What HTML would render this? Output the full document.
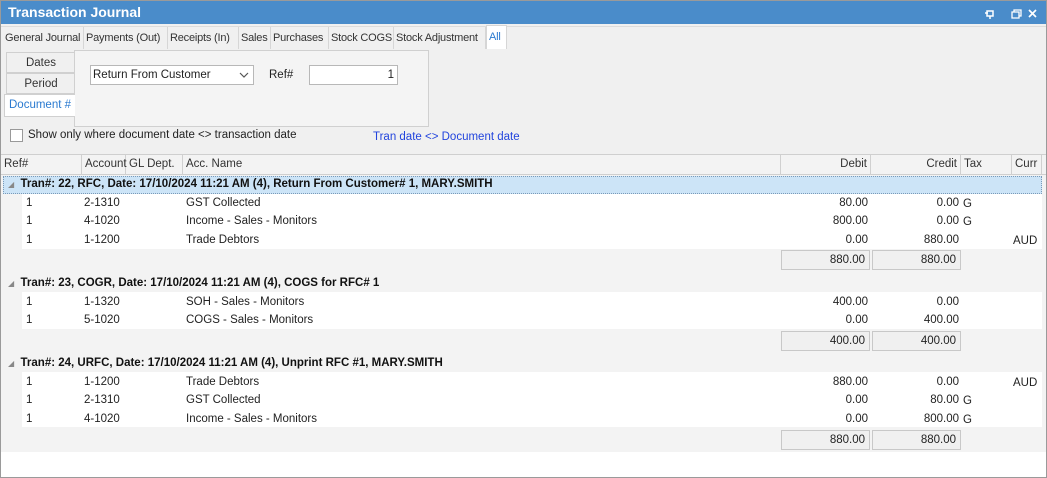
<!DOCTYPE html>
<html><head><meta charset="utf-8"><style>
*{margin:0;padding:0;box-sizing:border-box}
body{width:1047px;height:478px;overflow:hidden;background:#f0f0f0;font-family:"Liberation Sans",Tahoma,sans-serif;font-size:11.5px;color:#222;position:relative}
.a{position:absolute;white-space:nowrap}
.t{line-height:20px}
.r{text-align:right}
.tab{position:absolute;top:27px;height:22px;line-height:22px;border-right:1px solid #d6d6d6;padding-left:2px;color:#333;white-space:nowrap;overflow:hidden;font-size:11px;letter-spacing:-0.2px}
.hdr{position:absolute;top:155px;height:19px;line-height:18px;border-right:1px solid #d0d0d0;padding:0 3px;color:#333;white-space:nowrap}
.box{position:absolute;background:#f0f0f0;border:1px solid #c8c8c8;text-align:right;padding-right:4px;line-height:18px}
.g{font-weight:bold;color:#111}
</style></head><body>
<div class="a" style="left:0;top:0;width:1047px;height:478px;border:1px solid #9a9a9a"></div>
<div class="a" style="left:1px;top:1px;width:1045px;height:23px;background:#4a8cca"></div>
<div class="a" style="left:8px;top:4px;color:#fff;font-weight:bold;font-size:14px">Transaction Journal</div>
<svg class="a" style="left:984px;top:8px" width="56" height="12">
<path d="M3 3h6v5H3z M1 5h3 M6 8v3" stroke="#fff" stroke-width="1.5" fill="none"/>
<path d="M28 4h7v6h-7z M30 4V2h7v6h-2" stroke="#fff" stroke-width="1.3" fill="none"/>
<path d="M45 2l7 7M52 2l-7 7" stroke="#fff" stroke-width="1.7"/>
</svg>
<div class="a" style="left:1px;top:26px;width:1045px;height:1px;background:#dcdcdc"></div>
<div class="tab" style="left:3px;width:81px">General Journal</div>
<div class="tab" style="left:84px;width:84px">Payments (Out)</div>
<div class="tab" style="left:168px;width:71px">Receipts (In)</div>
<div class="tab" style="left:239px;width:32px">Sales</div>
<div class="tab" style="left:271px;width:58px">Purchases</div>
<div class="tab" style="left:329px;width:65px">Stock COGS</div>
<div class="tab" style="left:394px;width:92px">Stock Adjustment</div>
<div class="tab" style="left:486px;width:21px;background:#fff;color:#2a7ad0;top:25px;height:24px;border:1px solid #d6d6d6;border-bottom:none">All</div>
<div class="a" style="left:74px;top:50px;width:355px;height:77px;border:1px solid #d0d0d0;background:#f4f4f4"></div>
<div class="a" style="left:6px;top:52px;width:69px;height:21px;border:1px solid #d0d0d0;border-right:none;text-align:center;line-height:20px;color:#333">Dates</div>
<div class="a" style="left:6px;top:73px;width:69px;height:21px;border:1px solid #d0d0d0;border-right:none;text-align:center;line-height:20px;color:#333">Period</div>
<div class="a" style="left:4px;top:94px;width:71px;height:23px;border:1px solid #d0d0d0;border-right:none;background:#fff;line-height:21px;padding-left:4px;color:#2a7ad0">Document #</div>
<div class="a" style="left:90px;top:65px;width:164px;height:20px;border:1px solid #b8b8b8;background:#fff;line-height:18px;padding-left:2px">Return From Customer</div>
<svg class="a" style="left:239px;top:71px" width="10" height="8"><path d="M1 2l4 4 4-4" stroke="#555" stroke-width="1.2" fill="none"/></svg>
<div class="a t" style="left:269px;top:65px">Ref#</div>
<div class="a" style="left:309px;top:65px;width:89px;height:20px;border:1px solid #b8b8b8;background:#fff;line-height:18px;text-align:right;padding-right:3px">1</div>
<div class="a" style="left:10px;top:129px;width:13px;height:13px;border:1px solid #999;background:#fff"></div>
<div class="a t" style="left:28px;top:125px">Show only where document date &lt;&gt; transaction date</div>
<div class="a t" style="left:373px;top:127px;color:#2244dd">Tran date &lt;&gt; Document date</div>
<!-- grid -->
<div class="a" style="left:1px;top:154px;width:1045px;height:1px;background:#cfcfcf"></div>
<div class="a" style="left:1px;top:155px;width:1045px;height:297px;background:#f3f3f3"></div>
<div class="a" style="left:1px;top:452px;width:1045px;height:25px;background:#fff"></div>
<div class="hdr" style="left:1px;width:81px">Ref#</div>
<div class="hdr" style="left:82px;width:44px">Account</div>
<div class="hdr" style="left:126px;width:57px">GL Dept.</div>
<div class="hdr" style="left:183px;width:598px">Acc. Name</div>
<div class="hdr r" style="left:781px;width:90px">Debit</div>
<div class="hdr r" style="left:871px;width:90px">Credit</div>
<div class="hdr" style="left:961px;width:51px">Tax</div>
<div class="hdr" style="left:1012px;width:30px">Curr</div>
<div class="a" style="left:1px;top:174px;width:1045px;height:1px;background:#cfcfcf"></div>

<div class="a" style="left:3px;top:176px;width:1039px;height:18px;background:#cce4f7;border:1px dotted #7a9ab8"></div>
<div class="a t g" style="left:8px;top:174px"><span style="color:#888;font-size:8px;font-weight:normal">◢</span> &nbsp;Tran#: 22, RFC, Date: 17/10/2024 11:21 AM (4), Return From Customer# 1, MARY.SMITH</div>
<div class="a" style="left:22px;top:194px;width:1020px;height:55px;background:#fff"></div>
<div class="a t" style="left:26px;top:193px">1</div><div class="a t" style="left:84px;top:193px">2-1310</div><div class="a t" style="left:186px;top:193px">GST Collected</div><div class="a t r" style="left:781px;top:193px;width:87px">80.00</div><div class="a t r" style="left:871px;top:193px;width:88px">0.00</div><div class="a t" style="left:963px;top:194px">G</div>
<div class="a t" style="left:26px;top:211px">1</div><div class="a t" style="left:84px;top:211px">4-1020</div><div class="a t" style="left:186px;top:211px">Income - Sales - Monitors</div><div class="a t r" style="left:781px;top:211px;width:87px">800.00</div><div class="a t r" style="left:871px;top:211px;width:88px">0.00</div><div class="a t" style="left:963px;top:212px">G</div>
<div class="a t" style="left:26px;top:230px">1</div><div class="a t" style="left:84px;top:230px">1-1200</div><div class="a t" style="left:186px;top:230px">Trade Debtors</div><div class="a t r" style="left:781px;top:230px;width:87px">0.00</div><div class="a t r" style="left:871px;top:230px;width:88px">880.00</div><div class="a t" style="left:1013px;top:231px">AUD</div>
<div class="box" style="left:781px;top:250px;width:89px;height:20px">880.00</div>
<div class="box" style="left:872px;top:250px;width:89px;height:20px">880.00</div>

<div class="a t g" style="left:8px;top:273px"><span style="color:#888;font-size:8px;font-weight:normal">◢</span> &nbsp;Tran#: 23, COGR, Date: 17/10/2024 11:21 AM (4), COGS for RFC# 1</div>
<div class="a" style="left:22px;top:292px;width:1020px;height:37px;background:#fff"></div>
<div class="a t" style="left:26px;top:292px">1</div><div class="a t" style="left:84px;top:292px">1-1320</div><div class="a t" style="left:186px;top:292px">SOH - Sales - Monitors</div><div class="a t r" style="left:781px;top:292px;width:87px">400.00</div><div class="a t r" style="left:871px;top:292px;width:88px">0.00</div>
<div class="a t" style="left:26px;top:310px">1</div><div class="a t" style="left:84px;top:310px">5-1020</div><div class="a t" style="left:186px;top:310px">COGS - Sales - Monitors</div><div class="a t r" style="left:781px;top:310px;width:87px">0.00</div><div class="a t r" style="left:871px;top:310px;width:88px">400.00</div>
<div class="box" style="left:781px;top:331px;width:89px;height:20px">400.00</div>
<div class="box" style="left:872px;top:331px;width:89px;height:20px">400.00</div>

<div class="a t g" style="left:8px;top:353px"><span style="color:#888;font-size:8px;font-weight:normal">◢</span> &nbsp;Tran#: 24, URFC, Date: 17/10/2024 11:21 AM (4), Unprint RFC #1, MARY.SMITH</div>
<div class="a" style="left:22px;top:372px;width:1020px;height:55px;background:#fff"></div>
<div class="a t" style="left:26px;top:372px">1</div><div class="a t" style="left:84px;top:372px">1-1200</div><div class="a t" style="left:186px;top:372px">Trade Debtors</div><div class="a t r" style="left:781px;top:372px;width:87px">880.00</div><div class="a t r" style="left:871px;top:372px;width:88px">0.00</div><div class="a t" style="left:1013px;top:373px">AUD</div>
<div class="a t" style="left:26px;top:390px">1</div><div class="a t" style="left:84px;top:390px">2-1310</div><div class="a t" style="left:186px;top:390px">GST Collected</div><div class="a t r" style="left:781px;top:390px;width:87px">0.00</div><div class="a t r" style="left:871px;top:390px;width:88px">80.00</div><div class="a t" style="left:963px;top:391px">G</div>
<div class="a t" style="left:26px;top:409px">1</div><div class="a t" style="left:84px;top:409px">4-1020</div><div class="a t" style="left:186px;top:409px">Income - Sales - Monitors</div><div class="a t r" style="left:781px;top:409px;width:87px">0.00</div><div class="a t r" style="left:871px;top:409px;width:88px">800.00</div><div class="a t" style="left:963px;top:410px">G</div>
<div class="box" style="left:781px;top:430px;width:89px;height:20px">880.00</div>
<div class="box" style="left:872px;top:430px;width:89px;height:20px">880.00</div>
</body></html>
